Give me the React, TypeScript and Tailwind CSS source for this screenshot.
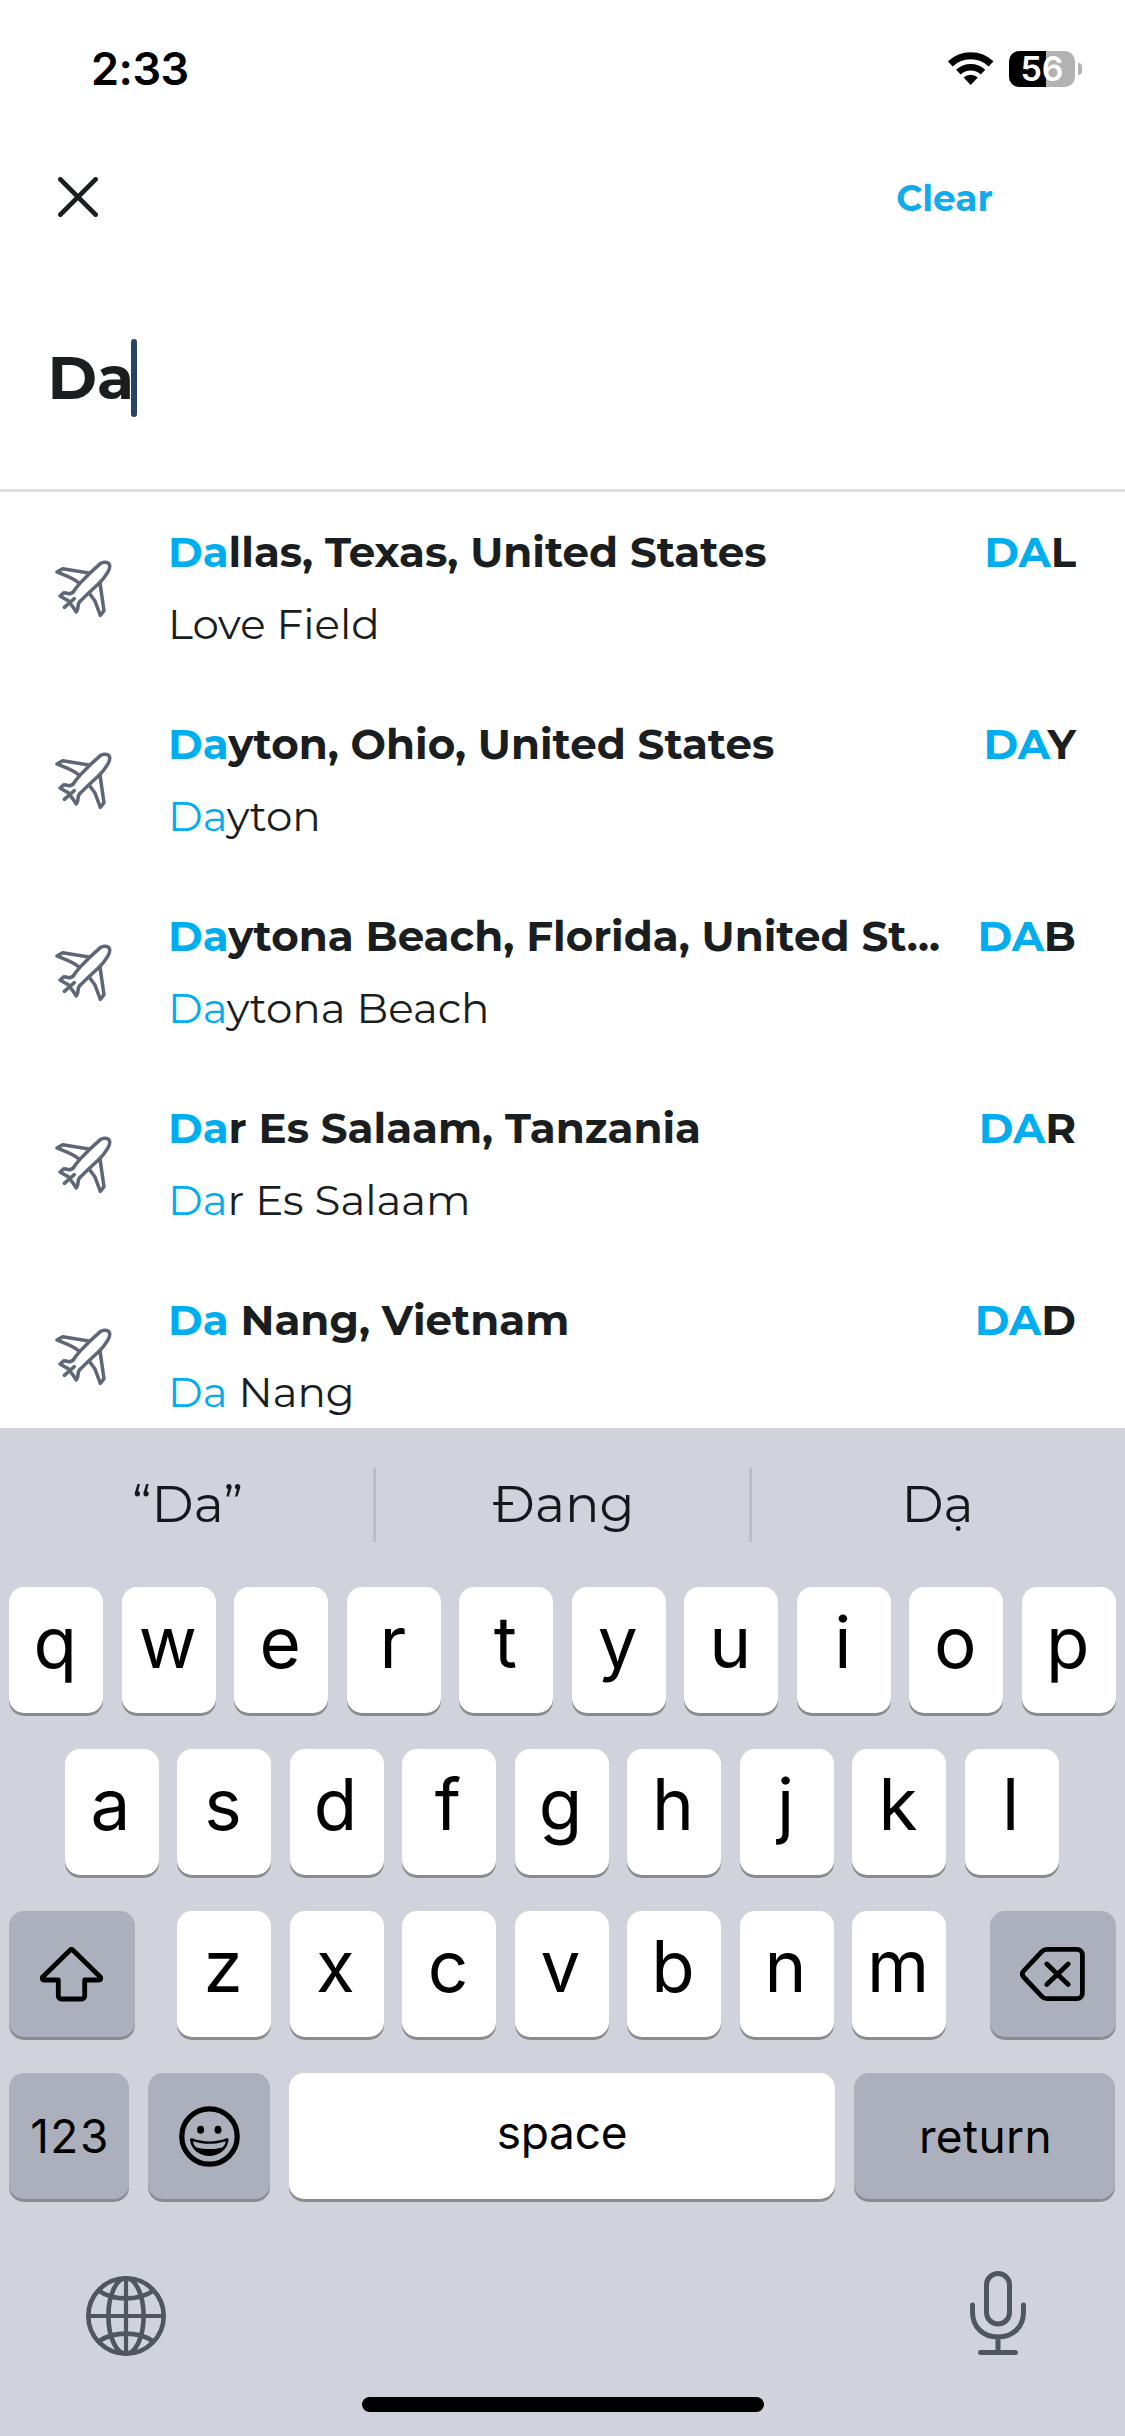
import type { ReactNode } from "react";

type Airport = { city: [string, string]; name: [string, string]; code: [string, string] };

const airports: Airport[] = [
  { city: ["Da", "llas, Texas, United States"], name: ["", "Love Field"], code: ["DA", "L"] },
  { city: ["Da", "yton, Ohio, United States"], name: ["Da", "yton"], code: ["DA", "Y"] },
  { city: ["Da", "ytona Beach, Florida, United St..."], name: ["Da", "ytona Beach"], code: ["DA", "B"] },
  { city: ["Da", "r Es Salaam, Tanzania"], name: ["Da", "r Es Salaam"], code: ["DA", "R"] },
  { city: ["Da", " Nang, Vietnam"], name: ["Da", " Nang"], code: ["DA", "D"] },
];

function Match({ parts }: { parts: [string, string] }) {
  return (
    <>
      <span className="text-[#00adef]">{parts[0]}</span>
      {parts[1]}
    </>
  );
}

function WifiIcon() {
  return (
    <svg className="h-[33px] w-[46px]" viewBox="0 0 46 33" fill="none" stroke="#000">
      <path d="M2.3 11.9A29.5 29.5 0 0 1 43.1 11.9" strokeWidth="7" />
      <path d="M10.4 20.2A17.8 17.8 0 0 1 35 20.2" strokeWidth="6.6" />
      <path d="M22.7 33L15.6 25.6A10.3 10.3 0 0 1 29.8 25.6Z" fill="#000" stroke="none" />
    </svg>
  );
}

function PlaneIcon() {
  return (
    <svg
      className="mt-1 h-[100px] w-[100px] shrink-0"
      viewBox="0 0 300 300"
      fill="none"
      stroke="#5f6675"
      strokeWidth="10.5"
      strokeLinecap="round"
      strokeLinejoin="round"
    >
      <path d="M118 131L151 98L181 71C190 64 202 66 207 71C211 77 209 87 203 97C197 107 189 118 179 128L145 160L122 182C114 189 114 193 114 200L113 207L109 216L99 201" />
      <path d="M118 131L104 150C97 161 90 163 82 160L72 158L60 168L82 181" />
      <path d="M147 99L68 86L51 96C78 107 103 114 117 130" />
      <path d="M180 129L192 212L181 226L165 183L148 160" />
      <path d="M73 202L103 176M84 181L97 199" />
    </svg>
  );
}

function ShiftIcon() {
  return (
    <svg className="h-[55px] w-[63px]" viewBox="0 0 63 55" fill="none" stroke="#000" strokeWidth="4.8" strokeLinejoin="round">
      <path d="M18.3 33H4C2 33 1.6 31 2.9 29.7L30 3.2c.9-.9 2.1-.9 3 0L60.1 29.7C61.4 31 61 33 59 33H44.7V49a3 3 0 0 1-3 3H21.3a3 3 0 0 1-3-3Z" />
    </svg>
  );
}

function BackspaceIcon() {
  return (
    <svg className="h-[54px] w-[65px]" viewBox="0 0 65 54" fill="none" stroke="#000" strokeWidth="4.8" strokeLinecap="round" strokeLinejoin="round">
      <path d="M27 2.4H57A5.4 5.4 0 0 1 62.4 7.8V46.2A5.4 5.4 0 0 1 57 51.6H27C25 51.6 23.4 51 22 49.6L3.6 30C1.8 28 1.8 26 3.6 24L22 4.4C23.4 3 25 2.4 27 2.4Z" />
      <path d="M26.8 17L48.2 37.4M48.2 17L26.8 37.4" />
    </svg>
  );
}

function EmojiIcon() {
  return (
    <svg className="h-[61px] w-[61px]" viewBox="0 0 61 61" fill="#000">
      <circle cx="30.5" cy="30.5" r="27.7" fill="none" stroke="#000" strokeWidth="5.2" />
      <ellipse cx="21.6" cy="23.8" rx="3.5" ry="4" />
      <ellipse cx="39" cy="23.8" rx="3.5" ry="4" />
      <path d="M13 32.3C24 36.5 37 36.5 47.6 32.3C49.4 32 49.8 33 49.4 34.8C48 44 40 50 30.3 50S12.5 44 11.1 34.8C10.8 33 11.2 32 13 32.3Z" />
      <path d="M14 35.2C25 38.6 36 38.6 46.8 35.2C46.4 38 45 40.4 43 41.4C35 43.6 26 43.6 17.6 41.4C15.6 40.4 14.4 38 14 35.2Z" fill="#abb0bc" />
    </svg>
  );
}

function GlobeIcon() {
  return (
    <svg className="mt-1.5 h-20 w-20" viewBox="0 0 80 80" fill="none" stroke="#50565d" strokeWidth="4.6">
      <circle cx="40" cy="40" r="37.7" />
      <ellipse cx="40" cy="40" rx="17.6" ry="37.7" />
      <path d="M40 2V78M2 40H78" strokeWidth="4.2" />
      <path d="M12.5 14.6Q24 22.4 40 22.4T67.5 14.6M12.5 65.4Q24 57.6 40 57.6T67.5 65.4" />
    </svg>
  );
}

function MicIcon() {
  return (
    <svg className="h-[84px] w-14" viewBox="0 0 56 84" fill="none" stroke="#50565d" strokeWidth="5" strokeLinecap="round">
      <rect x="16.5" y="2.5" width="23" height="50.5" rx="11.5" />
      <path d="M2.5 34V41C2.5 56 13 66 28 66S53.5 56 53.5 41V34M28 66V81M10.5 81.6H45.5" />
    </svg>
  );
}

function Key({ className, children }: { className: string; children: ReactNode }) {
  return (
    <div className={`flex h-[126px] items-center justify-center rounded-[15px] text-black shadow-[0_3px_0_#898b8f] ${className}`}>
      {children}
    </div>
  );
}

function Letters({ letters }: { letters: string }) {
  return (
    <div className="flex gap-[18.5px]">
      {letters.split("").map((letter) => (
        <Key key={letter} className="w-[94px] bg-white pr-0.5 pb-4 text-[71px]">
          {letter}
        </Key>
      ))}
    </div>
  );
}

function Keyboard() {
  return (
    <div className="flex h-[1008px] flex-col bg-[#d0d3db] font-['Inter',sans-serif]">
      <div className="flex h-[153px] items-center pr-0.5 font-['Montserrat','Inter',sans-serif] text-[51px] text-[#15181b]">
        <div className="flex-1 pl-0.5 text-center">“Da”</div>
        <div className="h-[75px] w-[3px] rounded-full bg-[#bbbec5]" />
        <div className="flex-1 pl-0.5 text-center">Đang</div>
        <div className="h-[75px] w-[3px] rounded-full bg-[#bbbec5]" />
        <div className="flex-1 text-center">Dạ</div>
      </div>

      <div className="flex flex-col items-center gap-9 px-[9px] pt-1.5">
        <Letters letters="qwertyuiop" />
        <div className="pr-0.5">
          <Letters letters="asdfghjkl" />
        </div>
        <div className="flex w-full justify-between">
          <Key className="w-[126px] bg-[#abb0bc] pr-0.5">
            <ShiftIcon />
          </Key>
          <div className="pr-0.5">
            <Letters letters="zxcvbnm" />
          </div>
          <Key className="w-[126px] bg-[#abb0bc] pr-0.5">
            <BackspaceIcon />
          </Key>
        </div>
        <div className="flex w-full justify-between pr-px">
          <Key className="w-[120px] bg-[#abb0bc] pl-0.5 text-[46px] tracking-[1.5px]">123</Key>
          <Key className="w-[122px] bg-[#abb0bc]">
            <EmojiIcon />
          </Key>
          <Key className="w-[546px] bg-white pb-2 text-[46px] tracking-[-0.3px]">space</Key>
          <Key className="w-[261px] bg-[#abb0bc] pl-0.5 text-[46px] tracking-[0.4px]">return</Key>
        </div>
      </div>

      <div className="flex items-center justify-between pt-[71px] pr-[99px] pl-[86px]">
        <GlobeIcon />
        <MicIcon />
      </div>
      <div className="mx-auto mt-[41px] h-[15px] w-[402px] rounded-full bg-black" />
    </div>
  );
}

export default function App() {
  return (
    <div className="h-[2436px] w-[1125px] overflow-hidden bg-white font-['Montserrat','Inter',sans-serif] text-[#1a1e21]">
      <div className="flex h-[1428px] flex-col overflow-hidden">
        <header className="flex h-[137px] shrink-0 items-center justify-between pr-[43px] pl-[91px] font-['Inter',sans-serif]">
          <div className="text-[45px] font-semibold tracking-[-0.5px] text-black">2:33</div>
          <div className="flex items-center gap-[15px]">
            <WifiIcon />
            <div className="flex items-center gap-[3px]">
              <div className="flex h-9 w-[66px] items-center justify-center rounded-[10px] bg-[linear-gradient(to_right,#000_37px,#b2b2b2_37px)] text-[34px] leading-none font-semibold text-white">
                56
              </div>
              <div className="h-3 w-1 rounded-r-full bg-[#b2b2b2]" />
            </div>
          </div>
        </header>

        <div className="flex h-[121px] shrink-0 items-center justify-between pr-[132px] pl-[58px]">
          <svg className="mb-0.5 h-10 w-10" viewBox="0 0 40 40" fill="none" stroke="#1a1e21" strokeWidth="4.8" strokeLinecap="round">
            <path d="M2.4 2.4L37.6 37.6M37.6 2.4L2.4 37.6" />
          </svg>
          <button className="text-[36px] font-bold text-[#11abec]">Clear</button>
        </div>

        <div className="flex h-[234px] shrink-0 items-center border-b-[3px] border-[#dcdfea] pt-2 pl-[47.5px]">
          <span className="text-[60px] font-bold">Da</span>
          <div className="-ml-[3px] h-[78px] w-1.5 rounded-full bg-[#294265]" />
        </div>

        <div className="flex shrink-0 flex-col gap-12 pt-6">
          {airports.map((airport) => (
            <div key={airport.code[1]} className="flex h-36 items-center gap-7 pr-[49px] pl-10">
              <PlaneIcon />
              <div className="min-w-0 flex-1 text-[42px] leading-[72px] whitespace-nowrap">
                <div className="flex justify-between font-bold">
                  <div className="whitespace-pre">
                    <Match parts={airport.city} />
                  </div>
                  <div>
                    <Match parts={airport.code} />
                  </div>
                </div>
                <div className="whitespace-pre">
                  <Match parts={airport.name} />
                </div>
              </div>
            </div>
          ))}
        </div>
      </div>
      <Keyboard />
    </div>
  );
}
